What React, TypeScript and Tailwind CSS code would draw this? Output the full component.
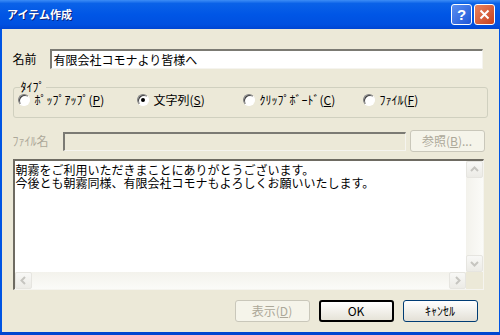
import React from 'react';

const font = { fontFamily: '"Noto Sans CJK JP", "Noto Sans", sans-serif' };

const Radio: React.FC<{ checked?: boolean; label: React.ReactNode; className?: string }> = ({ checked, label, className }) => (
  <div className={`flex items-center gap-[5px] ${className ?? ''}`}>
    <span className="w-[12px] h-[12px] shrink-0 rounded-full border border-t-[#808080] border-l-[#808080] border-b-white border-r-white bg-white flex items-center justify-center shadow-[inset_1px_1px_0_#404040]">
      {checked && <span className="w-[4px] h-[4px] rounded-full bg-black" />}
    </span>
    <span className="text-[12px] leading-[12px] text-black whitespace-nowrap">{label}</span>
  </div>
);

const Btn: React.FC<{ children: React.ReactNode; disabled?: boolean; isDefault?: boolean }> = ({ children, disabled, isDefault }) => (
  <div
    className={`w-[75px] h-[22px] rounded-[3px] flex items-center justify-center text-[12px] ${
      disabled
        ? 'border border-[#C9C7BA] bg-[#F5F4EA] text-[#ACA899]'
        : isDefault
        ? 'border-2 border-black bg-gradient-to-b from-white to-[#E6E3D8] text-black'
        : 'border border-[#003C74] bg-gradient-to-b from-white to-[#E3E0D6] text-black'
    }`}
  >
    {children}
  </div>
);

const Chevron: React.FC<{ dir: 'up' | 'down' | 'left' | 'right' }> = ({ dir }) => {
  const d = {
    up: 'M3 8 L6.5 4.5 L10 8',
    down: 'M3 5 L6.5 8.5 L10 5',
    left: 'M8 3 L4.5 6.5 L8 10',
    right: 'M5 3 L8.5 6.5 L5 10',
  }[dir];
  return (
    <svg width="13" height="13" viewBox="0 0 13 13">
      <path d={d} fill="none" stroke="#C6C5C0" strokeWidth="2" />
    </svg>
  );
};

const ScrollBtn: React.FC<{ dir: 'up' | 'down' | 'left' | 'right' }> = ({ dir }) => (
  <div className="w-[17px] h-[17px] rounded-[2px] border border-[#E6E5E0] bg-gradient-to-b from-[#F8F8F6] to-[#ECEBE6] flex items-center justify-center">
    <Chevron dir={dir} />
  </div>
);

export default function App() {
  return (
    <div className="w-[500px] h-[335px] overflow-hidden flex flex-col bg-[#0054E3]" style={font}>
      {/* title bar */}
      <div className="h-[29px] shrink-0 flex items-center pl-[7px] pr-[5px] bg-[linear-gradient(to_bottom,#3D8DF6_0%,#0A62E8_12%,#0056E6_50%,#0050E0_85%,#0045D2_100%)]">
        <span className="text-white font-bold text-[11px] [text-shadow:1px_1px_0_#0A1E7A]">アイテム作成</span>
        <div className="ml-auto flex gap-[2px]">
          <div className="w-[21px] h-[21px] rounded-[3px] border border-white bg-gradient-to-br from-[#5C8FF0] to-[#1D55D8] flex items-center justify-center text-white font-bold text-[15px] leading-none" style={{ fontFamily: '"Liberation Sans", sans-serif' }}>
            ?
          </div>
          <div className="w-[21px] h-[21px] rounded-[3px] border border-white bg-gradient-to-br from-[#E8825E] to-[#C7401C] flex items-center justify-center">
            <svg width="11" height="11" viewBox="0 0 11 11">
              <path d="M1.5 1.5 L9.5 9.5 M9.5 1.5 L1.5 9.5" stroke="white" strokeWidth="2" />
            </svg>
          </div>
        </div>
      </div>

      <div className="flex flex-1 min-h-0">
        <div className="w-[4px] bg-[#0054E3]" />
        <div className="flex-1 bg-[#ECE9D8] flex flex-col px-[11px] pt-[20px]">
          {/* name row */}
          <div className="flex items-center h-[20px]">
            <span className="w-[37px] text-[12px] text-black">名前</span>
            <div className="w-[433px] h-[20px] bg-white border-t-2 border-l-2 border-t-[#7B7A73] border-l-[#7B7A73] border-b border-r border-b-[#F5F4EF] border-r-[#F5F4EF] flex items-center pl-[2px] text-[12px] text-black">
              有限会社コモナより皆様へ
            </div>
          </div>

          {/* type group */}
          <fieldset className="mt-[12px] w-[475px] h-[37px] border border-[#D0D0BF] rounded-[3px] px-[4px]">
            <legend className="ml-[2px] px-[1px] text-[12px] leading-[12px] text-black">ﾀｲﾌﾟ</legend>
            <div className="flex items-center mt-[1px]">
              <Radio label={<>ﾎﾟｯﾌﾟｱｯﾌﾟ(<u>P</u>)</>} className="w-[119px]" />
              <Radio checked label={<>文字列(<u>S</u>)</>} className="w-[106px]" />
              <Radio label={<>ｸﾘｯﾌﾟﾎﾞｰﾄﾞ(<u>C</u>)</>} className="w-[120px]" />
              <Radio label={<>ﾌｧｲﾙ(<u>F</u>)</>} />
            </div>
          </fieldset>

          {/* file row */}
          <div className="mt-[12px] flex items-center h-[22px]">
            <span className="w-[50px] text-[12px] text-[#ACA899]">ﾌｧｲﾙ名</span>
            <div className="w-[343px] h-[19px] bg-[#ECE9D8] border-t-2 border-l-2 border-t-[#7B7A73] border-l-[#7B7A73] border-b border-r border-b-[#F5F4EF] border-r-[#F5F4EF]" />
            <div className="ml-[4px]">
              <Btn disabled>
                参照(<u>B</u>)...
              </Btn>
            </div>
          </div>

          {/* text area */}
          <div className="mt-[7px] w-[471px] h-[131px] bg-white border-t-2 border-l-2 border-t-[#6E6B62] border-l-[#6E6B62] border-b border-r border-b-[#F5F4EF] border-r-[#F5F4EF] flex flex-col">
            <div className="flex flex-1 min-h-0">
              <div className="flex-1 pl-[1px] pt-[2px] text-[12px] leading-[13px] text-black whitespace-nowrap overflow-hidden">
                <div className="h-[13px]">朝霧をご利用いただきまことにありがとうございます。</div>
                <div className="h-[13px]">今後とも朝霧同様、有限会社コモナもよろしくお願いいたします。</div>
              </div>
              <div className="w-[17px] flex flex-col bg-gradient-to-r from-[#F3F2EC] to-[#FBFBF8]">
                <ScrollBtn dir="up" />
                <div className="flex-1" />
                <ScrollBtn dir="down" />
              </div>
            </div>
            <div className="h-[17px] flex bg-gradient-to-b from-[#F3F2EC] to-[#FBFBF8]">
              <ScrollBtn dir="left" />
              <div className="flex-1" />
              <ScrollBtn dir="right" />
              <div className="w-[17px] bg-[#ECE9D8]" />
            </div>
          </div>

          {/* buttons */}
          <div className="mt-[10px] flex justify-end gap-[9px] pr-[10px]">
            <Btn disabled>
              表示(<u>D</u>)
            </Btn>
            <Btn isDefault>OK</Btn>
            <Btn>ｷｬﾝｾﾙ</Btn>
          </div>
        </div>
        <div className="w-[4px] bg-[#0054E3]" />
      </div>
      <div className="h-[3px] shrink-0 bg-[#0046D0]" />
    </div>
  );
}
